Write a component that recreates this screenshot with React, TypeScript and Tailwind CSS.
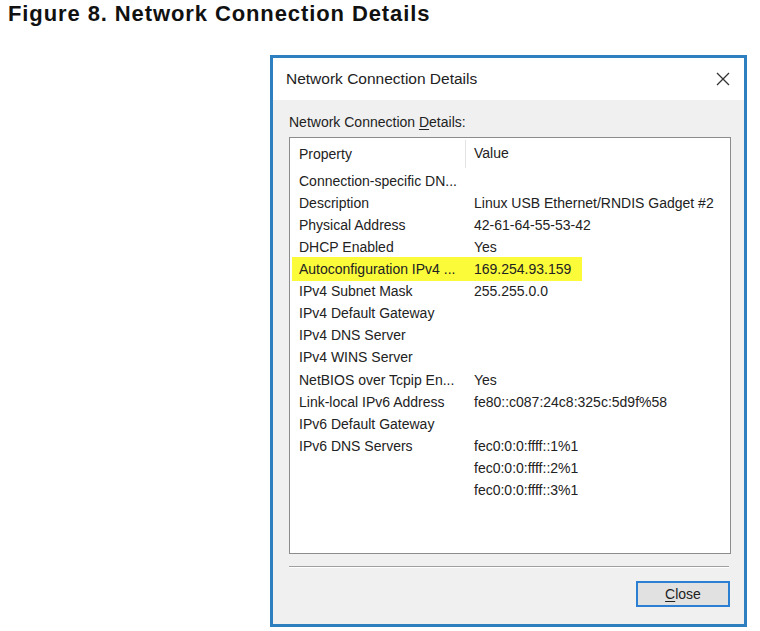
const rows: { prop: string; value: string; mark?: boolean }[] = [
  { prop: "Connection-specific DN...", value: "" },
  { prop: "Description", value: "Linux USB Ethernet/RNDIS Gadget #2" },
  { prop: "Physical Address", value: "42-61-64-55-53-42" },
  { prop: "DHCP Enabled", value: "Yes" },
  { prop: "Autoconfiguration IPv4 ...", value: "169.254.93.159", mark: true },
  { prop: "IPv4 Subnet Mask", value: "255.255.0.0" },
  { prop: "IPv4 Default Gateway", value: "" },
  { prop: "IPv4 DNS Server", value: "" },
  { prop: "IPv4 WINS Server", value: "" },
  { prop: "NetBIOS over Tcpip En...", value: "Yes" },
  { prop: "Link-local IPv6 Address", value: "fe80::c087:24c8:325c:5d9f%58" },
  { prop: "IPv6 Default Gateway", value: "" },
  { prop: "IPv6 DNS Servers", value: "fec0:0:0:ffff::1%1" },
  { prop: "", value: "fec0:0:0:ffff::2%1" },
  { prop: "", value: "fec0:0:0:ffff::3%1" },
];

function Row({ prop, value, mark }: { prop: string; value: string; mark?: boolean }) {
  if (mark) {
    return (
      <div className="h-[22px] flex">
        <div className="ml-[2px] w-[290px] h-[24px] -mt-[1px] flex items-center bg-[#fbfb3a]">
          <div className="w-[174px] pl-[7px] truncate">{prop}</div>
          <div className="pl-[8px]">{value}</div>
        </div>
      </div>
    );
  }
  return (
    <div className="h-[22px] flex items-center">
      <div className="w-[176px] pl-[9px] whitespace-nowrap">{prop}</div>
      <div className="pl-[8px] whitespace-nowrap">{value}</div>
    </div>
  );
}

export default function App() {
  return (
    <div className="w-[760px] h-[631px] bg-white overflow-hidden text-[#222]" style={{ fontFamily: '"Liberation Sans", Arial, sans-serif' }}>
      <div className="pl-[8px] pt-[3px] text-[22px] leading-[22px] font-bold tracking-[0.9px] text-[#111]">
        Figure 8. Network Connection Details
      </div>

      <div className="ml-[270px] mt-[30px] w-[477px] border-[3px] border-[#2d7fc0] flex flex-col">
        <div className="h-[42px] bg-white flex items-center justify-between pl-[13px] pr-[14px]">
          <span className="text-[15.5px] text-[#222]">Network Connection Details</span>
          <svg width="14" height="14" viewBox="0 0 14 14">
            <path d="M1 1 L13 13 M13 1 L1 13" stroke="#333" strokeWidth="1.3" fill="none" />
          </svg>
        </div>

        <div className="bg-[#f0f0f0] pt-[13px] pl-[16px] pr-[13px] pb-[17px] flex flex-col text-[14px]">
          <div className="leading-[18px]">
            Network Connection <span className="underline underline-offset-2">D</span>etails:
          </div>

          <div className="mt-[6px] h-[417px] border border-[#8c8c8c] bg-white flex flex-col">
            <div className="h-[30px] flex items-center">
              <div className="w-[176px] pl-[9px] h-[28px] mt-[2px] flex items-center border-r border-[#e3e3e3]">Property</div>
              <div className="pl-[8px]">Value</div>
            </div>
            <div className="pt-[2px] flex flex-col">
              {rows.slice(0, 9).map((r, i) => (
                <Row key={i} {...r} />
              ))}
              <div className="pt-[1px] flex flex-col">
                {rows.slice(9).map((r, i) => (
                  <Row key={i + 9} {...r} />
                ))}
              </div>
            </div>
          </div>

          <div className="mt-[12px] mr-[2px] h-[2px] border-t border-[#a0a0a0] border-b border-b-white" />

          <div className="mt-[13px] self-end mr-[1px] w-[94px] h-[26px] border-2 border-[#2b7fd2] bg-[#e1e1e1] flex items-center justify-center">
            <span>
              <span className="underline underline-offset-2">C</span>lose
            </span>
          </div>
        </div>
      </div>
    </div>
  );
}
